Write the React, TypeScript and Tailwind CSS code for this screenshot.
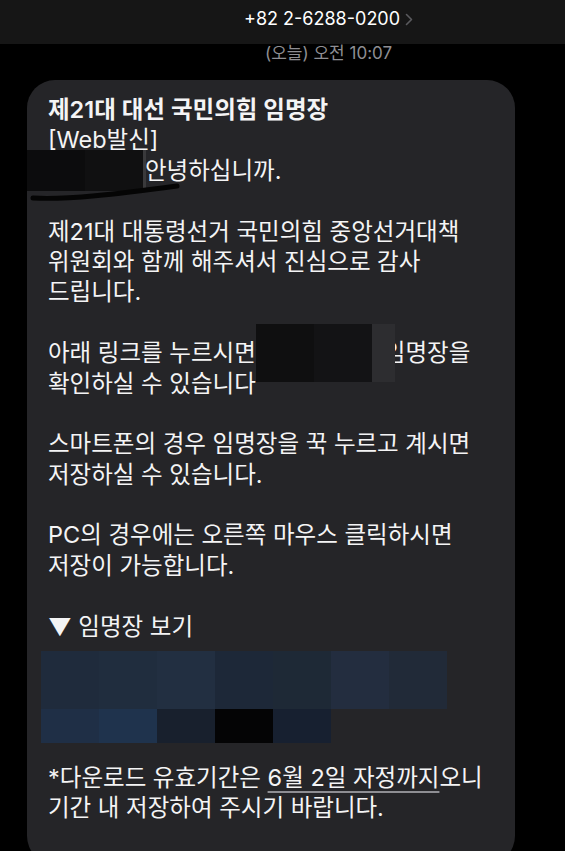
import React from 'react';

const row1 = ['#1f2b3c', '#202d3e', '#222f41', '#1d2838', '#1e2936', '#232d3f', '#212a38'];
const row2 = ['#1f2f46', '#1f334d', '#18202d', '#040405', '#172030', '#252528', '#252528'];

const Line: React.FC<{ children?: React.ReactNode }> = ({ children }) => (
  <div className="h-[30.4px] whitespace-nowrap">{children}</div>
);

export default function App() {
  return (
    <div
      className="w-[565px] h-[851px] overflow-hidden bg-black text-[#f4f4f5]"
      style={{ fontFamily: 'Inter, "Noto Sans CJK KR", sans-serif' }}
    >
      {/* header */}
      <div className="h-[44px] bg-[#161616] flex items-start pt-[8px] pl-[244px]">
        <span className="text-[18px] leading-[22px] text-white">+82 2-6288-0200</span>
        <svg className="ml-[5px] mt-[5px]" width="8" height="13" viewBox="0 0 8 13" fill="none">
          <path d="M1.5 1.5 L6.5 6.5 L1.5 11.5" stroke="#5a5a5e" strokeWidth="1.6" strokeLinecap="round" strokeLinejoin="round" />
        </svg>
      </div>

      <div className="h-[36px] flex items-start pl-[265px]">
        <span className="text-[17px] leading-[18px] text-[#8e8e93]">(오늘) 오전 10:07</span>
      </div>

      {/* bubble */}
      <div className="relative ml-[27px] w-[488px] rounded-[28px] bg-[#252528] pt-[15px] pl-[21px] pb-[40px] text-[23.5px] leading-[30.4px]">
        <Line>
          <span className="font-semibold">제21대 대선 국민의힘 임명장</span>
        </Line>
        <Line>[Web발신]</Line>
        <Line>
          <span className="inline-block w-[97px]" />안녕하십니까.
        </Line>
        <Line />
        <Line>제21대 대통령선거 국민의힘 중앙선거대책</Line>
        <Line>위원회와 함께 해주셔서 진심으로 감사</Line>
        <Line>드립니다.</Line>
        <Line />
        <Line>
          아래 링크를 누르시면<span className="inline-block w-[128px]" />임명장을
        </Line>
        <Line>확인하실 수 있습니다</Line>
        <Line />
        <Line>스마트폰의 경우 임명장을 꾹 누르고 계시면</Line>
        <Line>저장하실 수 있습니다.</Line>
        <Line />
        <Line>PC의 경우에는 오른쪽 마우스 클릭하시면</Line>
        <Line>저장이 가능합니다.</Line>
        <Line />
        <Line>▼ 임명장 보기</Line>

        {/* pixelated preview */}
        <div className="ml-[-7px] mt-[9px] mb-[20px] w-[406px]">
          <div className="grid grid-cols-7 h-[58px]">
            {row1.map((c, i) => (
              <div key={i} style={{ backgroundColor: c }} />
            ))}
          </div>
          <div className="grid grid-cols-7 h-[34px]">
            {row2.map((c, i) => (
              <div key={i} style={{ backgroundColor: c }} />
            ))}
          </div>
        </div>

        <Line>
          *다운로드 유효기간은{' '}
          <span className="underline decoration-[#8e8e93] decoration-[1.5px] underline-offset-[5px]">6월 2일 자정까지</span>
          오니
        </Line>
        <Line>기간 내 저장하여 주시기 바랍니다.</Line>

        {/* redactions */}
        <div className="absolute left-0 top-[70px] h-[41px] flex">
          <div className="w-[58px] bg-[#0c0c0d]" />
          <div className="w-[58px] bg-[#101011]" />
          <div className="w-[3px] bg-[#3a3a3c]" />
        </div>
        <svg className="absolute left-0 top-[100px]" width="160" height="22" viewBox="0 0 160 22">
          <path d="M6 18 C40 20, 90 14, 150 6" stroke="#050505" strokeWidth="5" fill="none" strokeLinecap="round" />
        </svg>
        <div className="absolute left-[229px] top-[244px] h-[58px] flex">
          <div className="w-[58px] bg-[#0f0f10]" />
          <div className="w-[58px] bg-[#131315]" />
          <div className="w-[23px] bg-[#2d2d30]" />
        </div>
      </div>
    </div>
  );
}
